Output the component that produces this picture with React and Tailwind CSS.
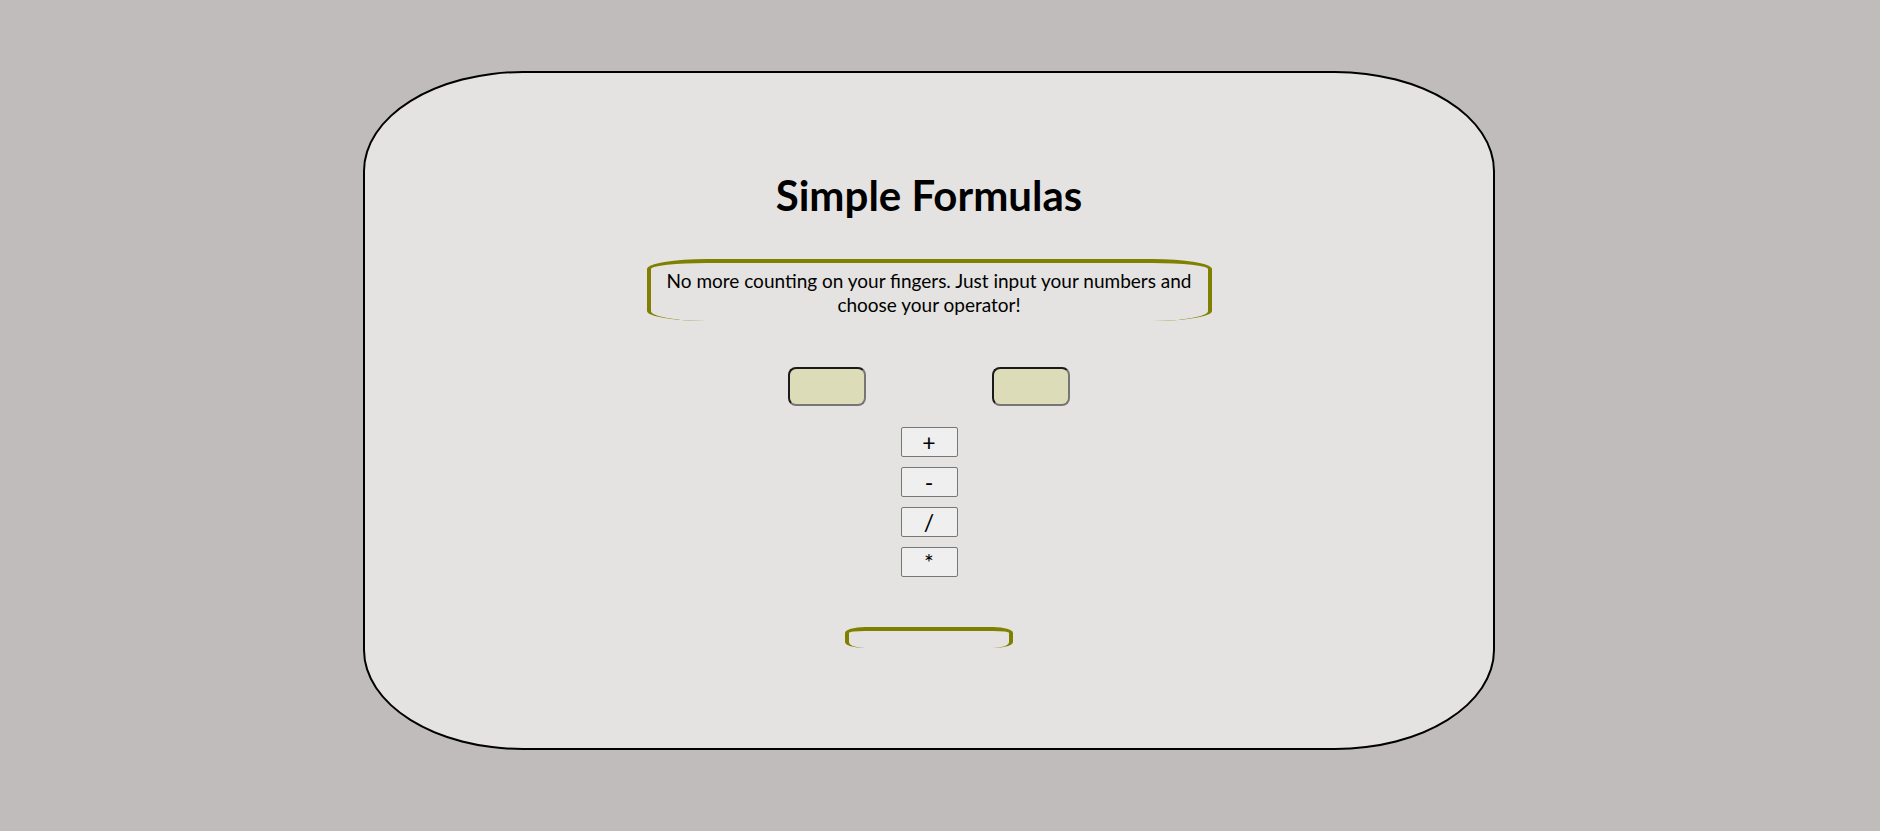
import React from 'react';

const ops = ['+', '-', '/', '*'];

const App = () => {
  return (
    <div className="min-h-[831px] bg-[#c0bcbb] pt-[71px] pl-[363px] font-['Lato','Open_Sans',sans-serif] text-black">
      <div className="w-[1132px] h-[679px] bg-[#e4e3e1] border-2 border-black rounded-[160px/100px] flex flex-col items-center">
        <h1 className="mt-[100px] text-[42px] font-bold leading-[44px]">Simple Formulas</h1>

        <div className="mt-[42px] w-[565px] min-h-[62px] border-4 border-b-0 border-[#808000] rounded-[60px/10px] px-4 pt-[6px] text-center text-[19px] leading-[24px]">
          No more counting on your fingers. Just input your numbers and choose your operator!
        </div>

        <div className="mt-[46px] flex gap-[126px]">
          <input className="w-[78px] h-[39px] bg-[#dddcb8] rounded-[8px] border-2 border-t-[#1a1a1a] border-l-[#1a1a1a] border-r-[#767676] border-b-[#767676] outline-none" />
          <input className="w-[78px] h-[39px] bg-[#dddcb8] rounded-[8px] border-2 border-t-[#1a1a1a] border-l-[#1a1a1a] border-r-[#767676] border-b-[#767676] outline-none" />
        </div>

        <div className="mt-[21px] flex flex-col gap-[10px]">
          {ops.map((op) => (
            <button
              key={op}
              className="w-[57px] h-[30px] bg-[#efefef] border border-[#767676] rounded-[2px] text-[23px] leading-none font-['Lato',sans-serif]"
            >
              {op}
            </button>
          ))}
        </div>

        <div className="mt-[50px] w-[168px] h-[21px] border-4 border-b-0 border-[#808000] rounded-[20px/6px]" />
      </div>
    </div>
  );
};

export default App;
